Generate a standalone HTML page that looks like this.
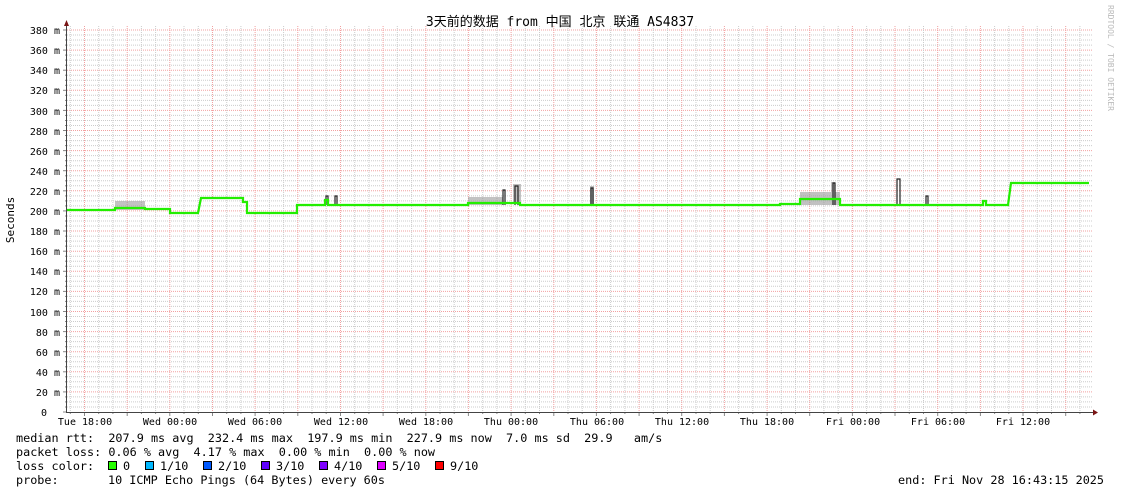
<!DOCTYPE html>
<html><head><meta charset="utf-8"><style>
html,body{margin:0;padding:0;background:#fff;width:1121px;height:494px;overflow:hidden}
svg{display:block}
text{font-family:"DejaVu Sans Mono","Liberation Mono","Noto Sans CJK SC",monospace;font-size:10px;fill:#000;white-space:pre}
.lg{font-size:11.8px}
</style></head><body>
<svg id="s" width="1121" height="494" xmlns="http://www.w3.org/2000/svg" xml:space="preserve">
<g id="grid"></g>
<text x="560" y="26" text-anchor="middle" style="font-size:13px">3天前的数据 from 中国 北京 联通 AS4837</text>
<text transform="translate(14,220) rotate(-90)" text-anchor="middle" style="font-size:11px">Seconds</text>
<text transform="translate(1108,5) rotate(90)" style="font-size:8px;fill:#bbb">RRDTOOL / TOBI OETIKER</text>
<g text-anchor="end">
<text x="60" y="34">380 m</text><text x="60" y="54">360 m</text><text x="60" y="74">340 m</text><text x="60" y="94">320 m</text><text x="60" y="115">300 m</text><text x="60" y="135">280 m</text><text x="60" y="155">260 m</text><text x="60" y="175">240 m</text><text x="60" y="195">220 m</text><text x="60" y="215">200 m</text><text x="60" y="235">180 m</text><text x="60" y="255">160 m</text><text x="60" y="275">140 m</text><text x="60" y="295">120 m</text><text x="60" y="316">100 m</text><text x="60" y="336">80 m</text><text x="60" y="356">60 m</text><text x="60" y="376">40 m</text><text x="60" y="396">20 m</text><text x="47" y="416">0</text>
</g>
<g text-anchor="middle">
<text x="85" y="425">Tue 18:00</text><text x="170" y="425">Wed 00:00</text><text x="255" y="425">Wed 06:00</text><text x="341" y="425">Wed 12:00</text><text x="426" y="425">Wed 18:00</text><text x="511" y="425">Thu 00:00</text><text x="597" y="425">Thu 06:00</text><text x="682" y="425">Thu 12:00</text><text x="767" y="425">Thu 18:00</text><text x="853" y="425">Fri 00:00</text><text x="938" y="425">Fri 06:00</text><text x="1023" y="425">Fri 12:00</text>
</g>
<g fill="#999" opacity="0.6">
<rect x="115" y="201" width="30" height="9"/><rect x="468" y="197" width="35" height="8"/><rect x="513" y="184" width="8" height="18"/>
<rect x="800" y="192" width="40" height="13"/><rect x="590" y="186" width="4" height="18"/><rect x="831" y="182" width="4" height="20"/>
</g>
<path fill="none" stroke="#222" stroke-width="1.2" d="M503,205V190h2V205 M515,205V186h3V205 M591,205V188h2V205 M326,205V196h2V205 M335,205V196h2V205 M833,205V183h2V205 M897,205V179h3V205 M926,205V196h2V205"/>
<path fill="none" stroke="#22ee00" stroke-width="2.2" d="M67,210H115V208H145V209H170V213H198L201,198H243V202H247V213H297V205H325V200H328V205H468V203H520V205H780V204H800V199H840V205H983V201H986V205H1008L1011,183H1089"/>
<text class="lg" x="16" y="442">median rtt:  207.9 ms avg  232.4 ms max  197.9 ms min  227.9 ms now  7.0 ms sd  29.9   am/s</text>
<text class="lg" x="16" y="456">packet loss: 0.06 % avg  4.17 % max  0.00 % min  0.00 % now</text>
<text class="lg" x="16" y="470">loss color:</text>
<g stroke="#000" stroke-width="1">
<rect x="108.5" y="461.5" width="8" height="8" fill="#26ff00"/>
<rect x="145.5" y="461.5" width="8" height="8" fill="#00b8ff"/>
<rect x="203.5" y="461.5" width="8" height="8" fill="#0059ff"/>
<rect x="261.5" y="461.5" width="8" height="8" fill="#5e00ff"/>
<rect x="319.5" y="461.5" width="8" height="8" fill="#7e00ff"/>
<rect x="377.5" y="461.5" width="8" height="8" fill="#dd00ff"/>
<rect x="435.5" y="461.5" width="8" height="8" fill="#ff0000"/>
</g>
<text class="lg" x="123" y="470">0</text><text class="lg" x="160" y="470">1/10</text><text class="lg" x="218" y="470">2/10</text><text class="lg" x="276" y="470">3/10</text><text class="lg" x="334" y="470">4/10</text><text class="lg" x="392" y="470">5/10</text><text class="lg" x="450" y="470">9/10</text>
<text class="lg" x="16" y="484">probe:</text>
<text class="lg" x="108" y="484">10 ICMP Echo Pings (64 Bytes) every 60s</text>
<text class="lg" x="1104" y="484" text-anchor="end">end: Fri Nov 28 16:43:15 2025</text>
</svg>
<script>
var g=document.getElementById('grid'),h='';
for(var v=0;v<=380;v+=5){var y=(412-v*1.0053).toFixed(1);var maj=v%20==0;
if(v>0)h+='<line x1="67" x2="1093" y1="'+y+'" y2="'+y+'" stroke="'+(maj?'#f2a0a0':'#ccc')+'" stroke-width="1" stroke-dasharray="1,1"/>';
h+='<line x1="'+(maj?63:65)+'" x2="67" y1="'+y+'" y2="'+y+'" stroke="#888"/>';}
for(var i=0;;i++){var x=84.5-14.22+i*14.22; if(x>1093)break; if(x<67)continue;
var red=((i-1)%3==0);
h+='<line y1="26" y2="412" x1="'+x.toFixed(1)+'" x2="'+x.toFixed(1)+'" stroke="'+(red?'#f2a0a0':'#ccc')+'" stroke-dasharray="1,1"/>';
h+='<line y1="412" y2="'+(red?416:414)+'" x1="'+x.toFixed(1)+'" x2="'+x.toFixed(1)+'" stroke="#888"/>';}
h+='<line x1="67" x2="1096" y1="412.5" y2="412.5" stroke="#444"/><line x1="66.5" x2="66.5" y1="24" y2="413" stroke="#444"/>';
h+='<polygon points="64,26 69,26 66.5,20" fill="#7a1515"/><polygon points="1093,409.5 1093,415.5 1098,412.5" fill="#7a1515"/>';
g.innerHTML=h;
</script>
</body></html>
